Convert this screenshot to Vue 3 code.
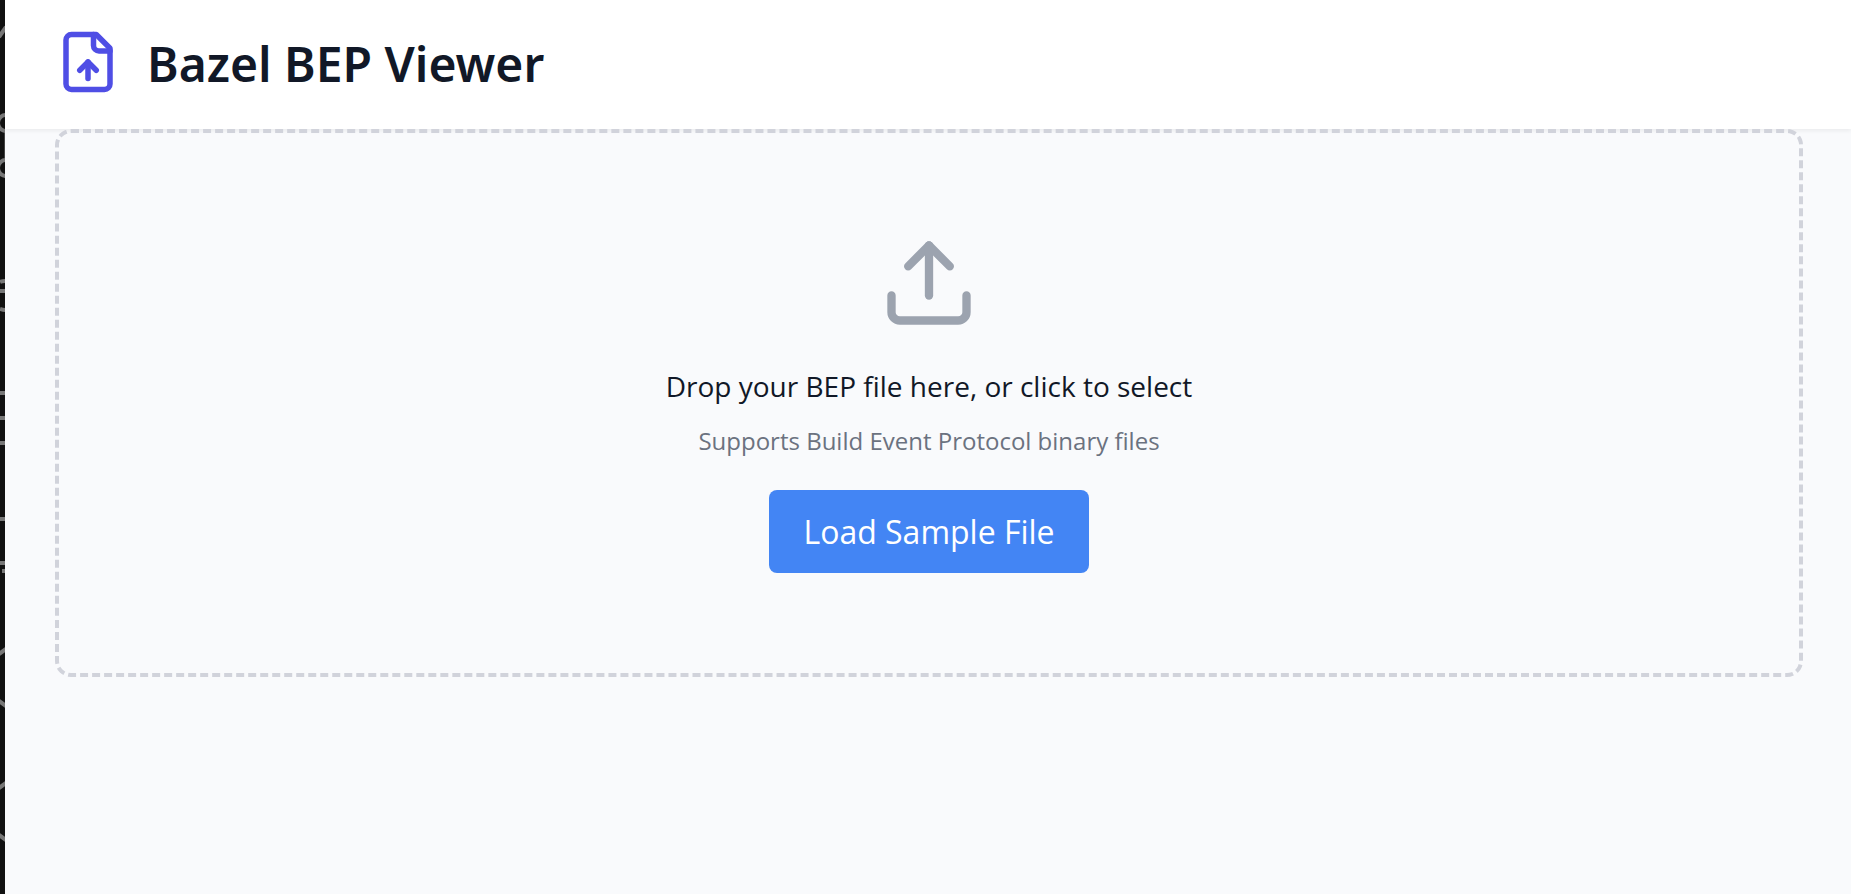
<script setup>
import { ref } from 'vue'

const fileInput = ref(null)
const dragging = ref(false)

function openPicker() {
  fileInput.value.click()
}
</script>

<template>
  <div class="shell">
    <svg class="edge" aria-hidden="true" fill="none" stroke="#777" stroke-width="4">
      <path d="M-1 37 6 27" />
      <circle cx="6" cy="123" r="8" />
      <circle cx="6" cy="168" r="8" />
      <path d="M5 131v29" stroke-width="1" />
      <path d="M0 282q2-1 5-1M0 291h5M0 309q3 1 5 1M0 393h5M0 418h5M0 443h5M0 519h5M0 563h5M2 571h3" />
      <path d="M-1 654 6 649M-1 701 6 706M-1 788 6 783M-1 835 6 840" />
    </svg>
    <div class="page">
      <header class="header">
        <svg class="logo" viewBox="0 0 24 24" aria-hidden="true">
          <path d="M15 2H6a2 2 0 0 0-2 2v16a2 2 0 0 0 2 2h12a2 2 0 0 0 2-2V7Z" />
          <path d="M14 2v4a2 2 0 0 0 2 2h4" />
          <path d="M12 12v6" />
          <path d="m15 15-3-3-3 3" />
        </svg>
        <h1>Bazel BEP Viewer</h1>
      </header>
      <main class="content">
        <section
          class="dropzone"
          :class="{ dragging }"
          @click="openPicker"
          @dragover.prevent="dragging = true"
          @dragleave="dragging = false"
          @drop.prevent="dragging = false"
        >
          <input id="bep-file" ref="fileInput" type="file" hidden @click.stop />
          <svg class="upload" viewBox="0 0 24 24" aria-hidden="true">
            <path d="M21 15v4a2 2 0 0 1-2 2H5a2 2 0 0 1-2-2v-4" />
            <path d="m17 8-5-5-5 5" />
            <path d="M12 3v12" />
          </svg>
          <label class="prompt" for="bep-file" @click.stop>Drop your BEP file here, or click to select</label>
          <p class="hint">Supports Build Event Protocol binary files</p>
          <button class="sample" type="button" @click.stop>Load Sample File</button>
        </section>
      </main>
    </div>
  </div>
</template>

<style>
body {
  margin: 0;
  background: #f9fafc;
}
</style>

<style scoped>
.shell {
  display: flex;
  min-height: 100vh;
  background: #f9fafc;
  color: #111827;
  font-family: "Open Sans", "Noto Sans", sans-serif;
}
.edge {
  flex: none;
  width: 5px;
  height: auto;
  background: #111;
  overflow: hidden;
}
.page {
  flex: 1;
  min-width: 0;
}
.header {
  display: flex;
  align-items: flex-start;
  gap: 26px;
  padding: 29px 48px 30px 50px;
  background: #fff;
  box-shadow: 0 2px 4px rgba(0, 0, 0, 0.06);
}
.logo,
.upload {
  flex: none;
  fill: none;
  stroke-width: 2;
  stroke-linecap: round;
  stroke-linejoin: round;
}
.logo {
  width: 66px;
  height: 66px;
  stroke: #4f4ee5;
}
h1 {
  margin: 0;
  font-family: "Noto Sans", sans-serif;
  font-size: 48px;
  line-height: 70px;
  font-weight: 600;
}
.content {
  padding: 0 48px 0 50px;
}
.dropzone {
  display: flex;
  flex-direction: column;
  align-items: center;
  padding: 100px 32px;
  border: 4px dashed #d1d3db;
  border-radius: 16px;
  text-align: center;
}
.dropzone.dragging {
  border-color: #4385f4;
}
.upload {
  width: 100px;
  height: 100px;
  stroke: #9ca3af;
}
.prompt {
  margin-top: 32px;
  font-size: 28px;
  line-height: 43px;
}
.hint {
  margin: 15px 0 32px;
  font-size: 24px;
  line-height: 35px;
  color: #6b7280;
}
.sample {
  padding: 16px 34px;
  border: 0;
  border-radius: 8px;
  background: #4385f4;
  color: #fff;
  font-family: inherit;
  font-size: 32px;
  line-height: 51px;
}
</style>
